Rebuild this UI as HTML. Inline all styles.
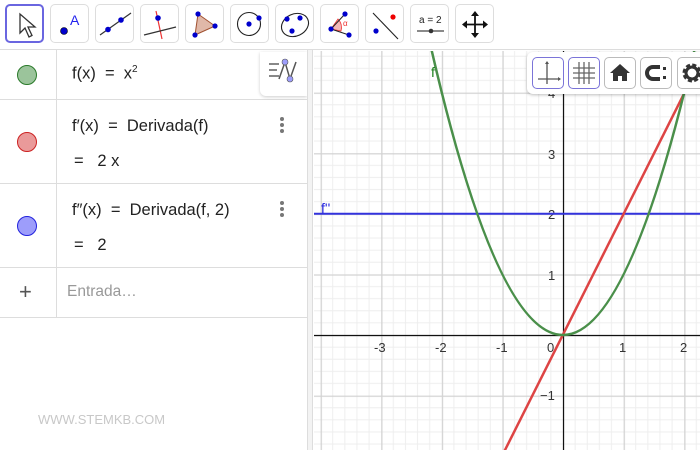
<!DOCTYPE html>
<html><head><meta charset="utf-8"><style>
*{margin:0;padding:0;box-sizing:border-box}
body{width:700px;height:450px;overflow:hidden;background:#fff;font-family:"Liberation Sans","DejaVu Sans",sans-serif;position:relative}
.tb{position:absolute;left:0;top:0;width:700px;height:50px;background:#fff;border-bottom:1px solid #ddd}
.btn{position:absolute;top:4px;width:39px;height:39px;border:1px solid #ddd;border-radius:5px;background:#fff}
.btn svg{position:absolute;left:0;top:0}
.sel{border:2px solid #6a66e0}
.alg{position:absolute;left:0;top:50px;width:307px;height:400px;background:#fff}
.split{position:absolute;left:307px;top:50px;width:6px;height:400px;background:#f3f3f3;border-left:1px solid #ddd;border-right:1px solid #ddd}
.row{position:absolute;left:0;width:307px;border-bottom:1px solid #ddd}
.row .l{position:absolute;left:56px;top:0;bottom:0;border-left:1px solid #ddd}
.dot{position:absolute;left:17px;width:20px;height:20px;border-radius:50%}
.t{position:absolute;left:72px;font-size:16.5px;color:#222;white-space:nowrap}
.menu{position:absolute;left:280px;width:4px}
.menu i{display:block;width:4px;height:4px;border-radius:2px;background:#777;margin-bottom:2px}
.gb{position:absolute;top:57px;width:32px;height:32px;border:1px solid #bbb;border-radius:5px;background:#fff}
.gb.on{border-color:#7b74d8}
</style></head><body>
<div class="tb">
 <div class="btn sel" style="left:5px"><svg width="36" height="36"><path d="M13 8 L13 27 L18 22 L22 31 L25 29.5 L21 21 L28 21 Z" fill="#fff" stroke="#333" stroke-width="1.3"/></svg></div>
 <div class="btn" style="left:50px"><svg width="38" height="38"><circle cx="13" cy="26" r="3.5" fill="#0000cc" stroke="#000" stroke-width=".6"/><text x="19" y="20" font-size="14" fill="#2222ee" font-family="Liberation Sans">A</text></svg></div>
 <div class="btn" style="left:95px"><svg width="38" height="38"><line x1="4" y1="30" x2="35" y2="8" stroke="#333" stroke-width="1.2"/><circle cx="12" cy="24.5" r="2.8" fill="#0000cc"/><circle cx="25" cy="15" r="2.8" fill="#0000cc"/></svg></div>
 <div class="btn" style="left:140px"><svg width="38" height="38"><line x1="15" y1="6" x2="21" y2="34" stroke="#e33" stroke-width="1.2"/><line x1="3" y1="30" x2="35" y2="22" stroke="#333" stroke-width="1.2"/><circle cx="17" cy="13" r="2.8" fill="#0000cc"/></svg></div>
 <div class="btn" style="left:185px"><svg width="38" height="38"><path d="M12 9 L29 21 L9 30 Z" fill="#e0b8a8" stroke="#a05030" stroke-width="1"/><circle cx="12" cy="9" r="2.6" fill="#0000cc"/><circle cx="29" cy="21" r="2.6" fill="#0000cc"/><circle cx="9" cy="30" r="2.6" fill="#0000cc"/></svg></div>
 <div class="btn" style="left:230px"><svg width="38" height="38"><circle cx="18" cy="19" r="11.5" fill="none" stroke="#222" stroke-width="1.1"/><circle cx="18" cy="19" r="2.6" fill="#0000cc"/><circle cx="28" cy="13" r="2.6" fill="#0000cc"/></svg></div>
 <div class="btn" style="left:275px"><svg width="38" height="38"><ellipse cx="19" cy="20" rx="14" ry="11" transform="rotate(-25 19 20)" fill="none" stroke="#222" stroke-width="1.1"/><circle cx="11" cy="14" r="2.6" fill="#0000cc"/><circle cx="24" cy="13" r="2.6" fill="#0000cc"/><circle cx="16" cy="26" r="2.6" fill="#0000cc"/></svg></div>
 <div class="btn" style="left:320px"><svg width="38" height="38"><path d="M10 24 L17 14 A12 12 0 0 1 20 26 Z" fill="#f4b8b8" stroke="#e33" stroke-width=".8"/><line x1="10" y1="24" x2="24" y2="9" stroke="#222"/><line x1="10" y1="24" x2="28" y2="30" stroke="#222"/><circle cx="10" cy="24" r="2.6" fill="#0000cc"/><circle cx="24" cy="9" r="2.6" fill="#0000cc"/><circle cx="28" cy="30" r="2.6" fill="#0000cc"/><text x="22" y="21" font-size="8" fill="#e33">α</text></svg></div>
 <div class="btn" style="left:365px"><svg width="38" height="38"><line x1="7" y1="8" x2="32" y2="34" stroke="#222" stroke-width="1.1"/><circle cx="27" cy="12" r="2.6" fill="#e00"/><circle cx="10" cy="26" r="2.6" fill="#0000cc"/></svg></div>
 <div class="btn" style="left:410px"><svg width="38" height="38"><text x="8" y="18" font-size="10" fill="#222" font-family="Liberation Sans">a = 2</text><line x1="6" y1="26" x2="33" y2="26" stroke="#444" stroke-width="1.2"/><circle cx="20" cy="26" r="2.3" fill="#333"/></svg></div>
 <div class="btn" style="left:455px"><svg width="38" height="38"><path d="M19 8 V31 M8 19.5 H30" stroke="#111" stroke-width="1.8"/><path d="M19 6 L15 11 H23Z M19 33 L15 28 H23Z M6 19.5 L11 15.5 V23.5Z M32 19.5 L27 15.5 V23.5Z" fill="#111"/></svg></div>
</div>

<svg style="position:absolute;left:0;top:0" width="700" height="450">
 <defs>
  <pattern id="g" patternUnits="userSpaceOnUse" x="563" y="335" width="60.6" height="60.6">
   <path d="M12.12 0V60.6M24.24 0V60.6M36.36 0V60.6M48.48 0V60.6M0 12.12H60.6M0 24.24H60.6M0 36.36H60.6M0 48.48H60.6" stroke="#eeeeee" stroke-width="1"/>
   <path d="M0.5 0V60.6M0 0.5H60.6" stroke="#d3d3d3" stroke-width="1.6"/>
  </pattern>
  <clipPath id="c"><rect x="314" y="51" width="386" height="399"/></clipPath>
 </defs>
 <g clip-path="url(#c)">
  <rect x="314" y="51" width="386" height="399" fill="url(#g)"/>
  <line x1="314" y1="335.5" x2="700" y2="335.5" stroke="#111" stroke-width="1.2"/>
  <line x1="563.5" y1="51" x2="563.5" y2="450" stroke="#111" stroke-width="1.2"/>
  <g font-size="13" fill="#333" font-family="Liberation Sans">
   <text x="374" y="352">-3</text><text x="435" y="352">-2</text><text x="496" y="352">-1</text><text x="547" y="352">0</text><text x="619" y="352">1</text><text x="680" y="352">2</text>
   <text x="548" y="98">4</text><text x="548" y="159">3</text><text x="548" y="219">2</text><text x="548" y="280">1</text><text x="540" y="400">−1</text>
  </g>
  <line x1="314" y1="213.8" x2="700" y2="213.8" stroke="#3333dd" stroke-width="2"/>
  <line x1="502" y1="456" x2="715" y2="32" stroke="#d44" stroke-width="2.5"/>
  <path d="M423.6 14.4 Q563 655.6 702.4 14.4" fill="none" stroke="#4a8f4a" stroke-width="2.5"/>
  <text x="431" y="77" font-size="14" fill="#1a801a" font-family="Liberation Sans">f</text>
  <text x="321" y="213" font-size="14" fill="#2222dd" font-family="Liberation Sans">f''</text>
 </g>
</svg>

<div style="position:absolute;left:527px;top:52px;width:180px;height:42px;background:#fff;border-radius:6px;box-shadow:0 1px 3px rgba(0,0,0,.25)"></div>
<div class="gb on" style="left:532px"><svg width="30" height="30"><path d="M14 4V26M5 21H27" stroke="#555" stroke-width="1.3"/><path d="M14 3L12 6H16Z M28 21L25 19V23Z" fill="#555"/></svg></div>
<div class="gb on" style="left:568px"><svg width="30" height="30"><path d="M10 4V26M15 4V26M20 4V26M4 10H26M4 15H26M4 20H26" stroke="#666" stroke-width="1.3"/></svg></div>
<div class="gb" style="left:604px"><svg width="30" height="30"><path d="M15 6L5 15H8V23H13V18H17V23H22V15H25Z" fill="#333"/></svg></div>
<div class="gb" style="left:640px"><svg width="30" height="30"><path d="M19 9H12A6 6 0 0 0 12 21H19" fill="none" stroke="#333" stroke-width="4"/><rect x="22" y="9" width="3" height="3" fill="#333"/><rect x="22" y="18" width="3" height="3" fill="#333"/></svg></div>
<div class="gb" style="left:677px"><svg width="30" height="30"><circle cx="14" cy="15" r="7" fill="none" stroke="#333" stroke-width="5" stroke-dasharray="3.5 2"/><circle cx="14" cy="15" r="6" fill="none" stroke="#333" stroke-width="3"/></svg></div>

<div class="alg">
 <div class="row" style="top:0;height:50px"><div class="l"></div><div class="dot" style="top:15px;background:#9bc49b;border:1px solid #2a7a2a"></div><div class="t" style="top:14px">f(x) &nbsp;= &nbsp;x<sup style="font-size:10px">2</sup></div></div>
 <div class="row" style="top:50px;height:84px"><div class="l"></div><div class="dot" style="top:32px;background:#ea9a9a;border:1px solid #cc2222"></div><div class="t" style="top:17px">f′(x) &nbsp;= &nbsp;Derivada(f)</div><div class="t" style="top:52px;left:74px">= &nbsp; 2 x</div><div class="menu" style="top:17px"><i></i><i></i><i></i></div></div>
 <div class="row" style="top:134px;height:84px"><div class="l"></div><div class="dot" style="top:32px;background:#9d9dfb;border:1px solid #2222dd"></div><div class="t" style="top:17px">f″(x) &nbsp;= &nbsp;Derivada(f, 2)</div><div class="t" style="top:52px;left:74px">= &nbsp; 2</div><div class="menu" style="top:17px"><i></i><i></i><i></i></div></div>
 <div class="row" style="top:218px;height:50px"><div class="l"></div><div style="position:absolute;left:19px;top:15px;font-size:22px;color:#555;line-height:18px">+</div><div class="t" style="top:15px;left:67px;color:#999;font-size:15.5px">Entrada…</div></div>
 <div style="position:absolute;left:38px;top:362px;font-size:13px;color:#c8c8c8">WWW.STEMKB.COM</div>
 <div style="position:absolute;left:260px;top:2px;width:47px;height:44px;background:#fff;border-radius:0 0 0 6px;box-shadow:0 1px 3px rgba(0,0,0,.2)"><svg width="47" height="44"><path d="M9 12H19M9 18H17M9 24H19" stroke="#888" stroke-width="2"/><path d="M19 27 L25 10 L30 27 L36 10" fill="none" stroke="#555" stroke-width="1.5"/><circle cx="25" cy="10" r="3" fill="#9d9dfb" stroke="#555" stroke-width=".6"/><circle cx="30" cy="27" r="3" fill="#9d9dfb" stroke="#555" stroke-width=".6"/></svg></div>
</div>
<div class="split"></div>
</body></html>
